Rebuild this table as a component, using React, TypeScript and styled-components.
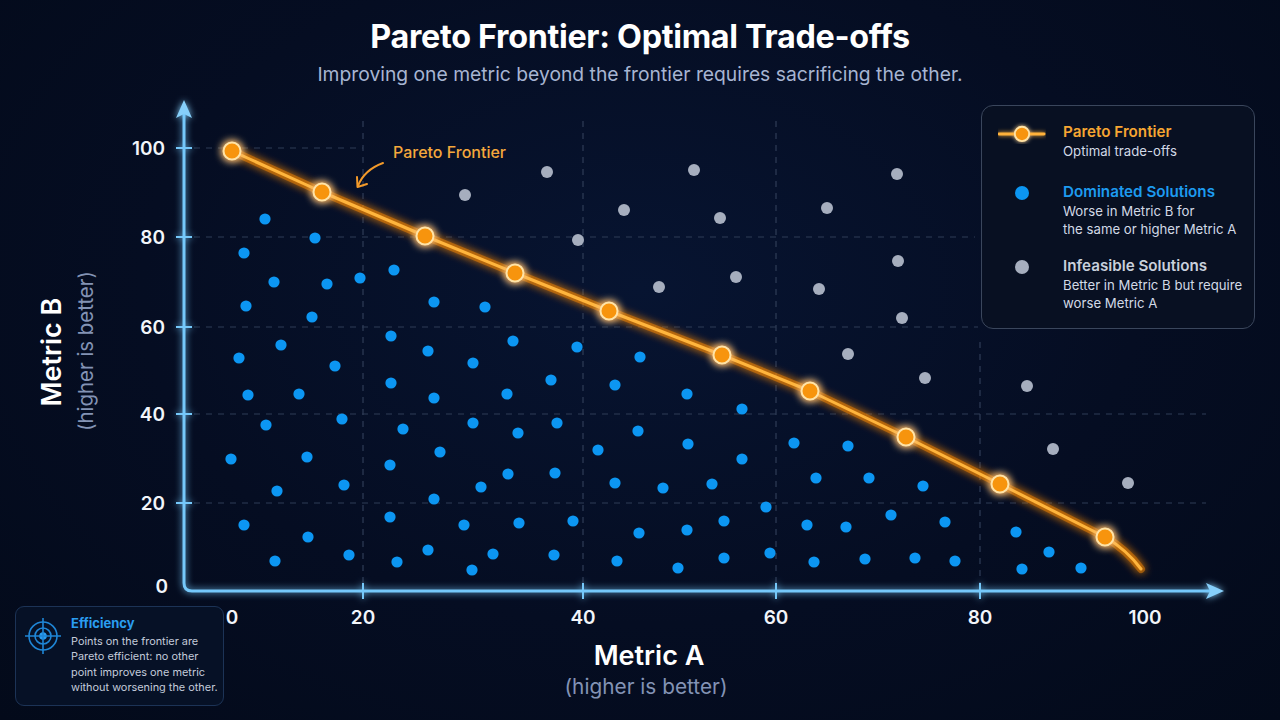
import React from "react";
import styled, { createGlobalStyle } from "styled-components";

const GlobalStyle = createGlobalStyle`
  * { box-sizing: border-box; }
  html, body { margin: 0; padding: 0; background: #040c1e; }
  body { font-family: Inter, "Noto Sans", "Liberation Sans", sans-serif; }
`;

const Page = styled.div`
  width: 1280px;
  height: 720px;
  overflow: hidden;
  display: flex;
  flex-direction: column;
  background: radial-gradient(ellipse at 50% 40%, #071431 0%, #050d22 55%, #030a1a 100%);
  color: #fff;
`;

const Header = styled.header`
  display: flex;
  flex-direction: column;
  align-items: center;
  padding: 19px 0 9px;
`;

const Title = styled.h1`
  margin: 0;
  font-size: 32.3px;
  line-height: 36px;
  font-weight: 700;
  letter-spacing: -0.3px;
  color: #ffffff;
  white-space: nowrap;
`;

const Subtitle = styled.p`
  margin: 7px 0 0;
  font-size: 19.3px;
  line-height: 24px;
  font-weight: 400;
  color: #a7b5d2;
  white-space: nowrap;
`;

const ChartArea = styled.main`
  position: relative;
  flex: 1;
`;

const ChartSvg = styled.svg`
  display: block;
  font-family: Inter, "Noto Sans", "Liberation Sans", sans-serif;
`;

const Legend = styled.aside`
  position: absolute;
  top: 10px;
  left: 981px;
  width: 274px;
  padding: 16px 8px 16px 16px;
  border: 1px solid #3a465c;
  border-radius: 12px;
  background: rgba(9, 17, 34, 0.9);
  display: flex;
  flex-direction: column;
  gap: 20px;
`;

const LegendItem = styled.div<{ $shift?: number }>`
  display: flex;
  align-items: flex-start;
  gap: 17px;
  margin-top: ${(p) => p.$shift ?? 0}px;
`;

const LegendIcon = styled.div`
  width: 48px;
  height: 22px;
  flex: none;
  display: flex;
  align-items: center;
  justify-content: center;
`;

const LegendText = styled.div`
  display: flex;
  flex-direction: column;
  white-space: nowrap;
`;

const LegendTitle = styled.div<{ $color: string }>`
  font-size: 15.2px;
  line-height: 20px;
  font-weight: 600;
  color: ${(p) => p.$color};
`;

const LegendDesc = styled.div`
  font-size: 13.2px;
  line-height: 18px;
  color: #d2d9e6;
`;

const Dot = styled.span<{ $color: string }>`
  width: 14px;
  height: 14px;
  border-radius: 50%;
  background: ${(p) => p.$color};
`;

const InfoBox = styled.aside`
  position: absolute;
  left: 15px;
  top: 511px;
  width: 209px;
  padding: 8px 6px 9px 8px;
  border: 1px solid #1c3356;
  border-radius: 9px;
  background: rgba(7, 18, 39, 0.92);
  display: flex;
  align-items: flex-start;
  gap: 9px;
`;

const InfoIcon = styled.div`
  width: 38px;
  height: 38px;
  flex: none;
  margin-top: 2px;
`;

const InfoText = styled.div`
  display: flex;
  flex-direction: column;
  white-space: nowrap;
`;

const InfoTitle = styled.div`
  font-size: 13px;
  line-height: 17px;
  font-weight: 700;
  color: #2a9df0;
  margin-bottom: 1.5px;
`;

const InfoDesc = styled.div`
  font-size: 10.9px;
  line-height: 15.6px;
  color: #c3cbda;
`;

const blue: [number, number][] = [
  [265, 219], [315, 238], [244, 253], [274, 282], [327, 284], [360, 278], [394, 270],
  [246, 306], [312, 317], [434, 302], [485, 307], [391, 336], [281, 345], [513, 341],
  [239, 358], [428, 351], [335, 366], [473, 363], [391, 383], [248, 395], [299, 394],
  [434, 398], [507, 394], [266, 425], [342, 419], [403, 429], [473, 423], [518, 433],
  [231, 459], [307, 457], [440, 452], [390, 465], [508, 474], [277, 491], [344, 485],
  [481, 487], [434, 499], [390, 517], [244, 525], [464, 525], [519, 523], [308, 537],
  [428, 550], [493, 554], [275, 561], [349, 555], [397, 562], [472, 570],
  [577, 347], [640, 357], [551, 380], [615, 385], [687, 394], [742, 409], [557, 423],
  [638, 431], [598, 450], [688, 444], [794, 443], [848, 446], [742, 459], [555, 473],
  [615, 483], [663, 488], [712, 484], [816, 478], [766, 507], [573, 521], [639, 533],
  [687, 530], [724, 521], [807, 525], [846, 527], [554, 555], [617, 561], [678, 568],
  [724, 558], [770, 553], [814, 562], [869, 478], [891, 515], [865, 559], [923, 486],
  [945, 522], [915, 558], [955, 561], [1016, 532], [1049, 552], [1022, 569], [1081, 568],
];

const gray: [number, number][] = [
  [465, 195], [547, 172], [694, 170], [897, 174], [624, 210], [720, 218], [827, 208],
  [578, 240], [898, 261], [736, 277], [659, 287], [819, 289], [902, 318], [848, 354],
  [925, 378], [1027, 386], [1053, 449], [1128, 483],
];

const frontier: [number, number][] = [
  [232, 151], [322, 192], [425, 236], [515, 273], [609, 311], [722, 355], [810, 391],
  [906, 437], [1000, 484], [1105, 537],
];

const frontierPath =
  "M" + frontier.map(([x, y]) => `${x} ${y}`).join(" L") + " Q1127 550 1141 569";

const hGrid: { y: number; x2: number }[] = [
  { y: 148, x2: 363 },
  { y: 237, x2: 975 },
  { y: 327, x2: 978 },
  { y: 414, x2: 1206 },
  { y: 503, x2: 1206 },
];

const vGrid: { x: number; y1: number }[] = [
  { x: 363, y1: 121 },
  { x: 583, y1: 121 },
  { x: 776, y1: 121 },
  { x: 980, y1: 342 },
];

const yLabels: { v: string; y: number; x: number }[] = [
  { v: "100", y: 148, x: 165 },
  { v: "80", y: 237, x: 165 },
  { v: "60", y: 327, x: 165 },
  { v: "40", y: 414, x: 165 },
  { v: "20", y: 503, x: 165 },
  { v: "0", y: 586, x: 168 },
];

const xLabels: { v: string; x: number }[] = [
  { v: "0", x: 232 },
  { v: "20", x: 363 },
  { v: "40", x: 583 },
  { v: "60", x: 776 },
  { v: "80", x: 980 },
  { v: "100", x: 1145 },
];

function Chart() {
  return (
    <ChartSvg width={1280} height={625} viewBox="0 95 1280 625">
      <defs>
        <filter id="glowOrange" filterUnits="userSpaceOnUse" x="0" y="0" width="1280" height="720">
          <feGaussianBlur in="SourceGraphic" stdDeviation="4" result="b" />
          <feMerge>
            <feMergeNode in="b" />
            <feMergeNode in="b" />
            <feMergeNode in="SourceGraphic" />
          </feMerge>
        </filter>
        <filter id="glowBlue" filterUnits="userSpaceOnUse" x="0" y="0" width="1280" height="720">
          <feGaussianBlur in="SourceGraphic" stdDeviation="3.5" result="b" />
          <feMerge>
            <feMergeNode in="b" />
            <feMergeNode in="SourceGraphic" />
          </feMerge>
        </filter>
      </defs>

      {/* grid */}
      <g stroke="#2f3d57" strokeWidth={1.2} strokeDasharray="6 6">
        {hGrid.map((g) => (
          <line key={g.y} x1={194} y1={g.y} x2={g.x2} y2={g.y} />
        ))}
        {vGrid.map((g) => (
          <line key={g.x} x1={g.x} y1={g.y1} x2={g.x} y2={583} />
        ))}
      </g>

      {/* axes */}
      <g filter="url(#glowBlue)">
        <path
          d="M184 113 L184 583 Q184 591 192 591 L1210 591"
          fill="none"
          stroke="#74c8fa"
          strokeWidth={3}
        />
        <polygon points="184,100 176,118 184,114 192,118" fill="#86cffa" />
        <polygon points="1224,591 1206,583 1210,591 1206,599" fill="#86cffa" />
        <g stroke="#74c8fa" strokeWidth={2}>
          {yLabels.slice(0, 5).map((l) => (
            <line key={l.v} x1={176} y1={l.y} x2={192} y2={l.y} />
          ))}
          {vGrid.map((g) => (
            <line key={g.x} x1={g.x} y1={583} x2={g.x} y2={599} />
          ))}
        </g>
      </g>

      {/* tick labels */}
      <g fill="#f2f5fa" fontSize={19} fontWeight={600}>
        {yLabels.map((l) => (
          <text key={l.v} x={l.x} y={l.y} textAnchor="end" dominantBaseline="central">
            {l.v}
          </text>
        ))}
        {xLabels.map((l) => (
          <text key={l.v} x={l.x} y={617} textAnchor="middle" dominantBaseline="central">
            {l.v}
          </text>
        ))}
      </g>

      {/* axis titles */}
      <text x={649} y={655} textAnchor="middle" dominantBaseline="central" fill="#ffffff" fontSize={27} fontWeight={600}>
        Metric A
      </text>
      <text x={646} y={686} textAnchor="middle" dominantBaseline="central" fill="#8393b5" fontSize={20.8}>
        (higher is better)
      </text>
      <text
        x={51}
        y={352}
        transform="rotate(-90 51 352)"
        textAnchor="middle"
        dominantBaseline="central"
        fill="#ffffff"
        fontSize={27}
        fontWeight={600}
      >
        Metric B
      </text>
      <text
        x={85}
        y={351}
        transform="rotate(-90 85 351)"
        textAnchor="middle"
        dominantBaseline="central"
        fill="#8393b5"
        fontSize={20.4}
      >
        (higher is better)
      </text>

      {/* points */}
      <g fill="#0c96f2">
        {blue.map(([x, y], i) => (
          <circle key={i} cx={x} cy={y} r={5.6} />
        ))}
      </g>
      <g fill="#a6aebe">
        {gray.map(([x, y], i) => (
          <circle key={i} cx={x} cy={y} r={6} />
        ))}
      </g>

      {/* frontier */}
      <path d={frontierPath} fill="none" stroke="#ff8c00" strokeWidth={8} strokeOpacity={0.45} filter="url(#glowOrange)" strokeLinecap="round" strokeLinejoin="round" />
      <path d={frontierPath} fill="none" stroke="#ffb53d" strokeWidth={3} strokeLinecap="round" strokeLinejoin="round" />
      <g filter="url(#glowOrange)">
        {frontier.map(([x, y], i) => (
          <circle key={i} cx={x} cy={y} r={8.5} fill="#f7940d" stroke="#ffe3a6" strokeWidth={2} />
        ))}
      </g>

      {/* annotation */}
      <text x={393} y={152} dominantBaseline="central" fill="#f5a83c" fontSize={16} fontWeight={500}>
        Pareto Frontier
      </text>
      <g stroke="#f39a2a" strokeWidth={2} fill="none" strokeLinecap="round" strokeLinejoin="round">
        <path d="M383 163 Q364 170 358 186" />
        <path d="M357 177 L357.5 187 L367 184" />
      </g>
    </ChartSvg>
  );
}

function FrontierIcon() {
  return (
    <svg width={50} height={22} viewBox="0 0 50 22">
      <defs>
        <filter id="legendGlow" x="-30%" y="-100%" width="160%" height="300%">
          <feGaussianBlur stdDeviation="2" result="b" />
          <feMerge>
            <feMergeNode in="b" />
            <feMergeNode in="SourceGraphic" />
          </feMerge>
        </filter>
      </defs>
      <g filter="url(#legendGlow)">
        <line x1={1} y1={12} x2={48} y2={12} stroke="#ffb23a" strokeWidth={3} strokeLinecap="round" />
        <circle cx={25} cy={12} r={7.5} fill="#f7940d" stroke="#ffe3a6" strokeWidth={2} />
      </g>
    </svg>
  );
}

function TargetIcon() {
  return (
    <svg width={38} height={38} viewBox="0 0 38 38" fill="none" stroke="#1f86d6" strokeWidth={1.6}>
      <circle cx={19} cy={19} r={14} />
      <circle cx={19} cy={19} r={8} />
      <circle cx={19} cy={19} r={3.8} fill="#2a9df0" stroke="none" />
      <line x1={19} y1={1} x2={19} y2={37} />
      <line x1={1} y1={19} x2={37} y2={19} />
    </svg>
  );
}

export default function App() {
  return (
    <>
      <GlobalStyle />
      <Page>
        <Header>
          <Title>Pareto Frontier: Optimal Trade-offs</Title>
          <Subtitle>Improving one metric beyond the frontier requires sacrificing the other.</Subtitle>
        </Header>
        <ChartArea>
          <Chart />
          <Legend>
            <LegendItem>
              <LegendIcon>
                <FrontierIcon />
              </LegendIcon>
              <LegendText>
                <LegendTitle $color="#f6a632">Pareto Frontier</LegendTitle>
                <LegendDesc>Optimal trade-offs</LegendDesc>
              </LegendText>
            </LegendItem>
            <LegendItem $shift={2}>
              <LegendIcon>
                <Dot $color="#0c96f2" />
              </LegendIcon>
              <LegendText>
                <LegendTitle $color="#1d9bf0">Dominated Solutions</LegendTitle>
                <LegendDesc>Worse in Metric B for</LegendDesc>
                <LegendDesc>the same or higher Metric A</LegendDesc>
              </LegendText>
            </LegendItem>
            <LegendItem $shift={-2}>
              <LegendIcon>
                <Dot $color="#a6aebe" />
              </LegendIcon>
              <LegendText>
                <LegendTitle $color="#c9d0dc">Infeasible Solutions</LegendTitle>
                <LegendDesc>Better in Metric B but require</LegendDesc>
                <LegendDesc>worse Metric A</LegendDesc>
              </LegendText>
            </LegendItem>
          </Legend>
          <InfoBox>
            <InfoIcon>
              <TargetIcon />
            </InfoIcon>
            <InfoText>
              <InfoTitle>Efficiency</InfoTitle>
              <InfoDesc>
                Points on the frontier are
                <br />
                Pareto efficient: no other
                <br />
                point improves one metric
                <br />
                without worsening the other.
              </InfoDesc>
            </InfoText>
          </InfoBox>
        </ChartArea>
      </Page>
    </>
  );
}
